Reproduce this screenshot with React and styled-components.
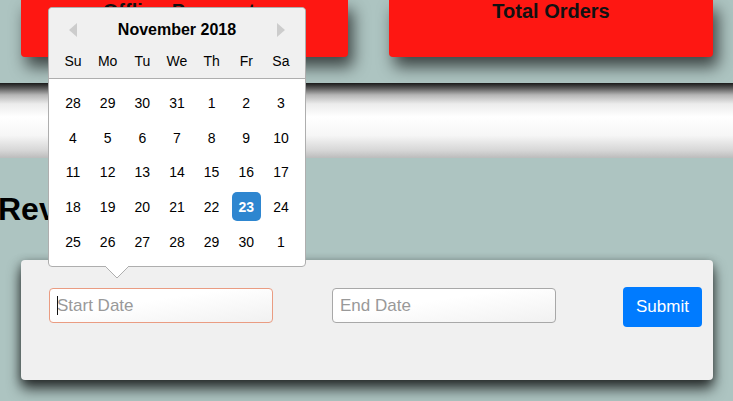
import React from "react";
import styled, { createGlobalStyle } from "styled-components";

const Global = createGlobalStyle`
  html, body { margin: 0; padding: 0; }
  body {
    background: #adc4c1;
    font-family: "Liberation Sans", Arial, sans-serif;
    overflow: hidden;
    width: 733px;
    height: 401px;
  }
`;

const Page = styled.div`
  position: relative;
  width: 733px;
  height: 401px;
`;

const CardRow = styled.div`
  display: grid;
  grid-template-columns: 327px 324px;
  column-gap: 41px;
  padding: 0 20px 0 21px;
`;

const Card = styled.div`
  height: 57px;
  background: #fe1712;
  border-radius: 0 0 4px 4px;
  box-shadow: 5px 10px 16px rgba(0, 0, 0, 0.65);
  text-align: center;
  font-size: 20px;
  font-weight: bold;
  line-height: 23px;
  color: #111;
`;

const Band = styled.div`
  margin-top: 26px;
  height: 75px;
  background: linear-gradient(
    to bottom,
    #1a1a1a 0%,
    #5a5a5a 7%,
    #b5b5b5 16%,
    #ececec 28%,
    #ffffff 45%,
    #f6f6f6 70%,
    #d6d6d6 90%,
    #bcbcbc 100%
  );
`;

const Heading = styled.h2`
  margin: 33px 0 0 -2px;
  font-size: 32px;
  line-height: 37px;
  font-weight: bold;
  color: #000;
`;

const Panel = styled.div`
  margin: 32px 20px 0 21px;
  height: 120px;
  box-sizing: border-box;
  background: #f0f0f0;
  border-radius: 4px;
  box-shadow: 0 9px 14px rgba(0, 0, 0, 0.7), 0 2px 10px rgba(0, 0, 0, 0.35);
  display: flex;
  align-items: flex-start;
  padding: 27px 11px 0 28px;
`;

const InputWrap = styled.div`
  position: relative;
  margin-top: 1px;
  margin-left: ${(p) => p.$offset || 0}px;
`;

const DateInput = styled.input`
  box-sizing: border-box;
  width: 224px;
  height: 35px;
  border: 1px solid ${(p) => (p.$focused ? "#ea9c82" : "#a8a8a8")};
  border-radius: 4px;
  padding: 0 7px;
  font-family: "Liberation Sans", Arial, sans-serif;
  font-size: 17px;
  color: #333;
  background: linear-gradient(to bottom right, #ffffff 40%, #f1f1f1 100%);
  outline: none;
  &::placeholder {
    color: #999;
  }
`;

const Caret = styled.span`
  position: absolute;
  left: 8px;
  top: 8px;
  width: 1px;
  height: 19px;
  background: #111;
`;

const SubmitButton = styled.button`
  margin-left: auto;
  width: 79px;
  height: 40px;
  border: none;
  border-radius: 4px;
  background: #007bff;
  color: #fff;
  font-family: "Liberation Sans", Arial, sans-serif;
  font-size: 17px;
  padding: 0;
`;

const Calendar = styled.div`
  position: absolute;
  left: 48px;
  top: 7px;
  width: 258px;
  box-sizing: border-box;
  background: #fff;
  border: 1px solid #aeaeae;
  border-radius: 4px;
  font-family: "Liberation Sans", Arial, sans-serif;
`;

const CalHeader = styled.div`
  position: relative;
  background: #f0f0f0;
  border-bottom: 1px solid #aeaeae;
  border-radius: 4px 4px 0 0;
  padding: 12px 0 3px;
`;

const MonthTitle = styled.div`
  text-align: center;
  font-size: 16px;
  font-weight: bold;
  line-height: 20px;
  color: #000;
`;

const NavArrow = styled.svg`
  position: absolute;
  top: 15px;
  ${(p) => (p.$side === "left" ? "left: 20px;" : "right: 20px;")}
`;

const Grid = styled.div`
  display: grid;
  grid-template-columns: repeat(7, 34.67px);
  grid-auto-rows: 34.67px;
  align-items: center;
  justify-items: center;
  padding: 0 6.67px;
`;

const NamesGrid = styled(Grid)`
  margin-top: 6px;
  grid-auto-rows: 29px;
`;

const DaysGrid = styled(Grid)`
  padding: 6.67px;
`;

const Cell = styled.div`
  width: 29px;
  height: 29px;
  display: flex;
  align-items: center;
  justify-content: center;
  font-size: 14px;
  color: ${(p) => (p.$selected ? "#fff" : "#000")};
  font-weight: ${(p) => (p.$selected ? "bold" : "normal")};
  background: ${(p) => (p.$selected ? "#2e86d0" : "transparent")};
  border-radius: 5px;
`;

const Pointer = styled.svg`
  position: absolute;
  left: 55px;
  bottom: -13px;
`;

const names = ["Su", "Mo", "Tu", "We", "Th", "Fr", "Sa"];
const days = [
  28, 29, 30, 31, 1, 2, 3,
  4, 5, 6, 7, 8, 9, 10,
  11, 12, 13, 14, 15, 16, 17,
  18, 19, 20, 21, 22, 23, 24,
  25, 26, 27, 28, 29, 30, 1,
];

export default function App() {
  return (
    <Page>
      <Global />
      <CardRow>
        <Card>Offline Payments</Card>
        <Card>Total Orders</Card>
      </CardRow>
      <Band />
      <Heading>Revenue</Heading>
      <Panel>
        <InputWrap>
          <DateInput $focused readOnly placeholder="Start Date" />
          <Caret />
        </InputWrap>
        <InputWrap $offset={59}>
          <DateInput readOnly placeholder="End Date" />
        </InputWrap>
        <SubmitButton>Submit</SubmitButton>
      </Panel>
      <Calendar>
        <CalHeader>
          <NavArrow $side="left" width="8" height="14" viewBox="0 0 8 14">
            <polygon points="8,0 0,7 8,14" fill="#cccccc" />
          </NavArrow>
          <MonthTitle>November 2018</MonthTitle>
          <NavArrow $side="right" width="8" height="14" viewBox="0 0 8 14">
            <polygon points="0,0 8,7 0,14" fill="#cccccc" />
          </NavArrow>
          <NamesGrid>
            {names.map((n) => (
              <Cell key={n}>{n}</Cell>
            ))}
          </NamesGrid>
        </CalHeader>
        <DaysGrid>
          {days.map((d, i) => (
            <Cell key={i} $selected={i === 26}>
              {d}
            </Cell>
          ))}
        </DaysGrid>
        <Pointer width="26" height="13" viewBox="0 0 26 13">
          <polygon points="1,0 13,12 25,0" fill="#ffffff" />
          <polyline points="1,0 13,12 25,0" fill="none" stroke="#aeaeae" strokeWidth="1" />
        </Pointer>
      </Calendar>
    </Page>
  );
}
